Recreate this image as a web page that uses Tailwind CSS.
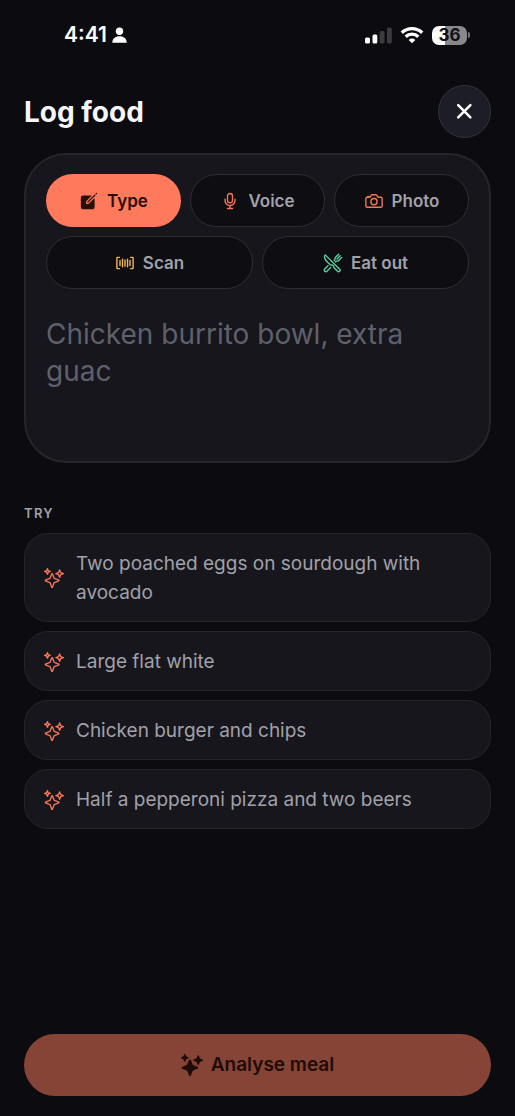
<!DOCTYPE html>
<html lang="en">
<head>
<meta charset="utf-8">
<meta name="viewport" content="width=device-width, initial-scale=1">
<title>Log food</title>
<script src="https://cdn.jsdelivr.net/npm/@tailwindcss/browser@4"></script>
</head>
<body class="min-h-screen flex flex-col bg-[#0b0b10] font-['Inter',sans-serif] text-[#f7f6fc]">
<svg class="hidden" aria-hidden="true">
  <symbol id="sparkles" viewBox="0 0 512 512">
    <path stroke="currentColor" stroke-width="35" stroke-linejoin="round" stroke-linecap="round" d="M259.92 262.91L216.4 149.77a9 9 0 00-16.8 0l-43.52 113.14a9 9 0 01-5.17 5.17L37.77 311.6a9 9 0 000 16.8l113.14 43.52a9 9 0 015.17 5.17l43.52 113.14a9 9 0 0016.8 0l43.52-113.14a9 9 0 015.17-5.17l113.14-43.52a9 9 0 000-16.8l-113.14-43.52a9 9 0 01-5.17-5.17zM108 68L88 16 68 68 16 88l52 20 20 52 20-52 52-20-52-20zM426.67 117.33L400 48l-26.67 69.33L304 144l69.33 26.67L400 240l26.67-69.33L496 144l-69.33-26.67z"/>
  </symbol>
</svg>

<div class="flex h-[70px] items-center justify-between pl-16 pr-[45px] text-white">
  <div class="flex items-center gap-[5px]">
    <span class="text-[21px] leading-6 font-semibold">4:41</span>
    <svg class="h-4 w-[15px]" viewBox="0 0 15 16" fill="currentColor" aria-hidden="true"><circle cx="7.5" cy="4.200" r="3.700"/><path d="M.3 15.800C.3 11.500 3.400 9.200 7.500 9.200s7.200 2.300 7.200 6.600z"/></svg>
  </div>
  <div class="flex items-center gap-2">
    <svg class="h-[17px] w-[27px]" viewBox="0 0 27 17" fill="currentColor" aria-hidden="true"><rect x="0" y="10.500" width="5" height="6" rx="1.500"/><rect x="7.500" y="7.500" width="4.800" height="9" rx="1.500"/><g fill="#3b3b40"><rect x="14.700" y="4" width="4.800" height="12.500" rx="1.500"/><rect x="22" y=".5" width="4.800" height="16" rx="1.500"/></g></svg>
    <svg class="h-[18px] w-6" viewBox="0 0 24 18" fill="none" stroke="currentColor" stroke-width="3.300" aria-hidden="true"><path d="M1.800 6.700a14.600 14.600 0 0120.400 0M5.700 10.700a9 9 0 0112.600 0"/><path d="M12 17.300l-3.300-3.400a4.700 4.700 0 016.600 0z" fill="currentColor" stroke="none"/></svg>
    <div class="flex items-center gap-px">
      <span class="flex h-[19px] w-[35px] items-center justify-center rounded-[7px] bg-linear-to-r from-white from-37% to-[#88888b] to-37% text-[17px] leading-none font-bold text-[#101014]">36</span>
      <span class="h-[6px] w-[2px] rounded-r-full bg-[#77777b]"></span>
    </div>
  </div>
</div>

<main class="flex flex-1 flex-col px-6 pb-5">
  <header class="mt-[15px] flex items-center justify-between">
    <h1 class="text-[28px] leading-9 font-bold">Log food</h1>
    <button type="button" aria-label="Close" class="flex size-[53px] items-center justify-center rounded-full border border-[#33333a] bg-[#1c1d26] text-white">
      <svg class="size-[17px]" viewBox="0 0 17 17" fill="none" stroke="currentColor" stroke-width="2.500" stroke-linecap="round"><path d="M2.200 2.200l12.200 12.200M14.400 2.200L2.200 14.400"/></svg>
    </button>
  </header>

  <section class="mt-[15px] rounded-[42px] border-2 border-[#25252c] bg-[#16161c] px-5 pt-[19px] pb-5">
    <div class="flex flex-col gap-[9px] text-[17px] leading-6 font-semibold text-[#a1a1aa]">
      <div class="grid grid-cols-3 gap-[9px]">
        <button type="button" class="flex h-[53px] items-center justify-center gap-2 rounded-full bg-[#ff7a5c] text-[#2a0f08]">
          <svg class="size-5" viewBox="0 0 512 512" fill="currentColor"><path d="M459.94 53.25a16.06 16.06 0 00-23.22-.56L424.35 65a8 8 0 000 11.31l11.34 11.32a8 8 0 0011.34 0l12.06-12c6.1-6.09 6.67-16.01.85-22.38zM399.34 90L218.82 270.2a9 9 0 00-2.31 3.93L208.16 299a3.91 3.91 0 004.86 4.86l24.85-8.35a9 9 0 003.93-2.31L422 112.66a9 9 0 000-12.66l-9.95-10a9 9 0 00-12.71 0z"/><path d="M386.34 193.66L264.45 315.79A41.08 41.08 0 01247.58 326l-25.9 8.67a35.92 35.92 0 01-44.33-44.33l8.67-25.9a41.08 41.08 0 0110.19-16.87L318.34 125.66A8 8 0 00312.69 112H104a56 56 0 00-56 56v240a56 56 0 0056 56h240a56 56 0 0056-56V199.31a8 8 0 00-13.66-5.65z"/></svg>
          Type
        </button>
        <button type="button" class="flex h-[53px] items-center justify-center gap-2 rounded-full border border-[#2e2e35] bg-[#0d0d12]">
          <svg class="size-5 text-[#f77658]" viewBox="0 0 512 512" fill="none" stroke="currentColor" stroke-width="35" stroke-linecap="round" stroke-linejoin="round"><path d="M192 448h128M384 208v32c0 70.4-57.6 128-128 128s-128-57.6-128-128v-32M256 368v80"/><path d="M256 64a63.68 63.68 0 00-64 64v111c0 35.2 29 65 64 65s64-29 64-65V128c0-36-28-64-64-64z"/></svg>
          Voice
        </button>
        <button type="button" class="flex h-[53px] items-center justify-center gap-2 rounded-full border border-[#2e2e35] bg-[#0d0d12]">
          <svg class="size-5 text-[#f77658]" viewBox="0 0 512 512" fill="none" stroke="currentColor" stroke-width="35" stroke-linecap="round" stroke-linejoin="round"><path d="M350.54 148.68l-26.62-42.06C318.31 100.08 310.62 96 302 96h-92c-8.62 0-16.31 4.08-21.92 10.62l-26.62 42.06C155.85 155.23 148.62 160 140 160H80a32 32 0 00-32 32v192a32 32 0 0032 32h352a32 32 0 0032-32V192a32 32 0 00-32-32h-59c-8.65 0-16.85-4.77-22.46-11.32zM124 158v-22h-24v22"/><circle cx="256" cy="272" r="80"/></svg>
          Photo
        </button>
      </div>
      <div class="grid grid-cols-2 gap-[9px]">
        <button type="button" class="flex h-[53px] items-center justify-center gap-2 rounded-full border border-[#2e2e35] bg-[#0d0d12]">
          <svg class="size-5 text-[#efb456]" viewBox="0 0 512 512" fill="none" stroke="currentColor" stroke-width="36" stroke-linecap="round" stroke-linejoin="round"><path d="M400 400.33h48a16 16 0 0016-16v-256a16 16 0 00-16-16h-48M112 112.33H64a16 16 0 00-16 16v256a16 16 0 0016 16h48M384 192.33v128M320 160.33v192M256 176.33v160M192 160.33v192M128 192.33v128"/></svg>
          Scan
        </button>
        <button type="button" class="flex h-[53px] items-center justify-center gap-2 rounded-full border border-[#2e2e35] bg-[#0d0d12]">
          <svg class="size-5 text-[#5fd3a0]" viewBox="0 0 512 512" fill="none" stroke="currentColor" stroke-width="35" stroke-linecap="round" stroke-linejoin="round"><path d="M57.49 47.74l368.43 368.43a37.28 37.28 0 010 52.72 37.29 37.29 0 01-52.72 0l-90-91.55a32 32 0 01-9.2-22.43v-5.53a32 32 0 00-9.52-22.78l-11.62-10.73a32 32 0 00-29.8-7.44 48.53 48.53 0 01-46.56-12.63l-85.43-85.44C40.39 159.68 21.74 83.15 57.49 47.74z"/><path d="M400 32l-77.25 77.25A64 64 0 00304 154.51v14.86a16 16 0 01-4.69 11.32L288 192M320 224l11.31-11.31a16 16 0 0111.32-4.69h14.86a64 64 0 0045.26-18.75L480 112M440 72l-80 80M200 368l-99.28 99.28a40 40 0 01-56.57 0 40 40 0 010-56.57L128 328"/></svg>
          Eat out
        </button>
      </div>
    </div>
    <textarea aria-label="Meal description" placeholder="Chicken burrito bowl, extra guac" class="mt-[27px] block h-[125px] w-full resize-none text-[28px] leading-[37px] outline-none placeholder:text-[#5f606c]"></textarea>
  </section>

  <h2 class="mt-10 text-[13px] leading-5 font-semibold tracking-widest text-[#a1a1aa]">TRY</h2>
  <div class="mt-[10px] flex flex-col gap-[9px] text-[19px] leading-[29px] text-[#a1a1aa]">
    <button type="button" class="flex items-center gap-3 rounded-3xl border border-[#25252c] bg-[#16161c] px-[19px] pt-[15px] pb-[14px] text-left"><svg class="size-5 shrink-0 text-[#f77658]" fill="none"><use href="#sparkles"/></svg><span>Two poached eggs on sourdough with avocado</span></button>
    <button type="button" class="flex items-center gap-3 rounded-3xl border border-[#25252c] bg-[#16161c] px-[19px] pt-[15px] pb-[14px] text-left"><svg class="size-5 shrink-0 text-[#f77658]" fill="none"><use href="#sparkles"/></svg><span>Large flat white</span></button>
    <button type="button" class="flex items-center gap-3 rounded-3xl border border-[#25252c] bg-[#16161c] px-[19px] pt-[15px] pb-[14px] text-left"><svg class="size-5 shrink-0 text-[#f77658]" fill="none"><use href="#sparkles"/></svg><span>Chicken burger and chips</span></button>
    <button type="button" class="flex items-center gap-3 rounded-3xl border border-[#25252c] bg-[#16161c] px-[19px] pt-[15px] pb-[14px] text-left"><svg class="size-5 shrink-0 text-[#f77658]" fill="none"><use href="#sparkles"/></svg><span>Half a pepperoni pizza and two beers</span></button>
  </div>

  <button type="button" class="mt-auto flex h-[62px] items-center justify-center gap-2 rounded-full bg-[#864436] text-[19px] leading-7 font-semibold text-[#1f0b07]">
    <svg class="size-[22px]" fill="currentColor"><use href="#sparkles"/></svg>
    Analyse meal
  </button>
</main>
</body>
</html>
